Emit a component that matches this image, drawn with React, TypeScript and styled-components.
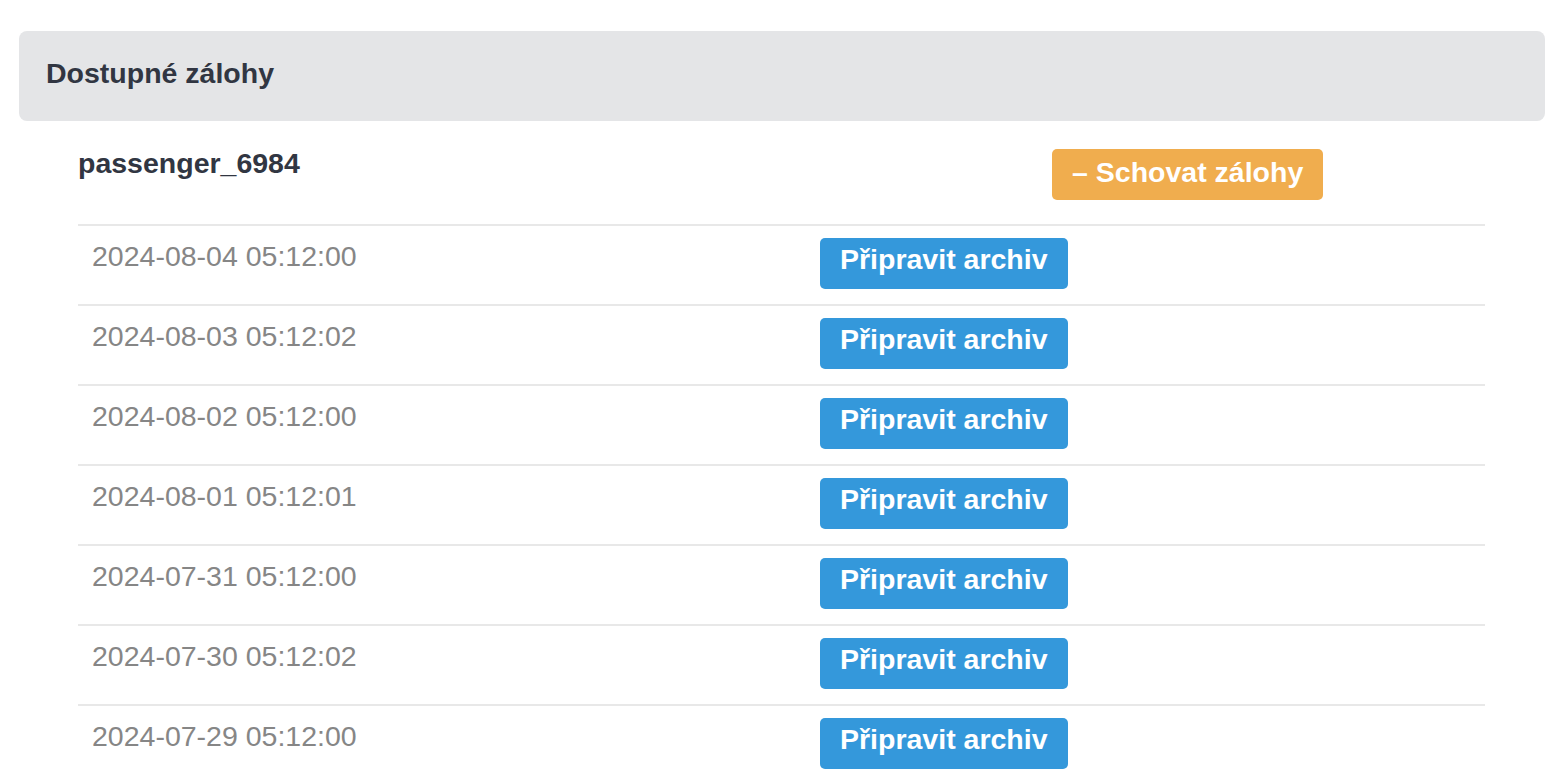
import React from 'react';
import styled, { createGlobalStyle } from 'styled-components';

const GlobalStyle = createGlobalStyle`
  body {
    margin: 0;
    background: #ffffff;
    font-family: 'Liberation Sans', Arial, Helvetica, sans-serif;
    font-size: 28.5px;
    line-height: 40px;
  }
`;

const Page = styled.div`
  padding: 31px 8px 0 19px;
`;

const PanelHeading = styled.div`
  box-sizing: border-box;
  height: 90px;
  padding: 22px 27px 0;
  background-color: #e4e5e7;
  border-radius: 8px;
  color: #313642;
  font-weight: 700;
`;

const Content = styled.div`
  margin: 0 60px 0 59px;
`;

const UserRow = styled.div`
  display: grid;
  grid-template-columns: 974px auto;
  align-items: start;
  padding: 28px 0 24px;
`;

const UserName = styled.div`
  margin-top: -6px;
  color: #313642;
  font-weight: 700;
`;

const BackupRow = styled.div`
  display: grid;
  grid-template-columns: 742px auto;
  align-items: start;
  height: 80px;
  box-sizing: border-box;
  border-top: 2px solid #e8e8e8;
`;

const DateCell = styled.div`
  padding: 10px 0 0 14px;
  color: #868686;
`;

const ButtonCell = styled.div`
  padding-top: 12px;
`;

const Button = styled.button<{ $variant: 'primary' | 'warning' }>`
  box-sizing: border-box;
  height: 51px;
  padding: ${({ $variant }) => ($variant === 'warning' ? '6px 20px 0' : '4px 20px 0')};
  border: none;
  border-radius: 5px;
  font-family: inherit;
  font-size: 28.5px;
  font-weight: 700;
  line-height: 34px;
  color: #ffffff;
  white-space: nowrap;
  display: inline-flex;
  align-items: flex-start;
  cursor: pointer;
  background-color: ${({ $variant }) => ($variant === 'warning' ? '#f0ad4e' : '#3498db')};
`;

const backups = [
  '2024-08-04 05:12:00',
  '2024-08-03 05:12:02',
  '2024-08-02 05:12:00',
  '2024-08-01 05:12:01',
  '2024-07-31 05:12:00',
  '2024-07-30 05:12:02',
  '2024-07-29 05:12:00',
];

function App() {
  return (
    <>
      <GlobalStyle />
      <Page>
        <PanelHeading>Dostupné zálohy</PanelHeading>
        <Content>
          <UserRow>
            <UserName>passenger_6984</UserName>
            <div>
              <Button $variant="warning">– Schovat zálohy</Button>
            </div>
          </UserRow>
          {backups.map((date) => (
            <BackupRow key={date}>
              <DateCell>{date}</DateCell>
              <ButtonCell>
                <Button $variant="primary">Připravit archiv</Button>
              </ButtonCell>
            </BackupRow>
          ))}
        </Content>
      </Page>
    </>
  );
}

export default App;
